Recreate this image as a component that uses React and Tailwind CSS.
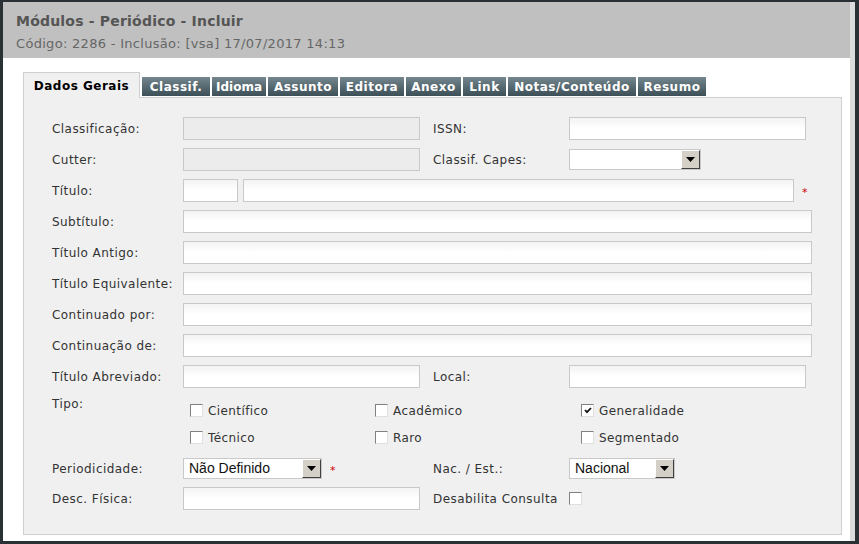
import React from 'react';

const FONT = { fontFamily: '"DejaVu Sans", Verdana, sans-serif' };
const SEL_FONT = { fontFamily: '"Liberation Sans", Arial, sans-serif' };

const TABS = [
  { t: 'Classif.', w: 'w-[68px]' },
  { t: 'Idioma', w: 'w-[54px] tracking-[0px]' },
  { t: 'Assunto', w: 'w-[70px]' },
  { t: 'Editora', w: 'w-[64px]' },
  { t: 'Anexo', w: 'w-[55px]' },
  { t: 'Link', w: 'w-[43px]' },
  { t: 'Notas/Conteúdo', w: 'w-[128px] tracking-[0.3px]' },
  { t: 'Resumo', w: 'w-[68px]' },
];

const Label = ({ children, className = 'w-[131px]' }) => (
  <div className={`${className} shrink-0 text-[12px] tracking-[0.45px] leading-[14px] text-[#333]`}>{children}</div>
);

const Field = ({ className = 'w-[237px]', disabled }) => (
  <div
    className={`${className} h-[23px] border border-[#c9c9c9] ${
      disabled ? 'bg-[#ececec]' : 'bg-gradient-to-b from-[#f3f3f3] via-white to-white'
    }`}
  />
);

const Arrow = () => (
  <div className="w-[19px] h-[19px] bg-[#d4d0c8] border border-t-white border-l-white border-r-[#404040] border-b-[#404040] flex items-center justify-center">
    <svg width="9" height="5" viewBox="0 0 9 5"><path d="M0 0h9L4.5 5z" fill="#000" /></svg>
  </div>
);

const Select = ({ className, value }) => (
  <div className={`${className} h-[21px] bg-white border border-[#c9c9c9] flex items-center justify-between`}>
    <span className="pl-[5px] text-[14px] text-[#111]" style={SEL_FONT}>{value}</span>
    <Arrow />
  </div>
);

const Check = ({ checked }) => (
  <div className="w-[13px] h-[13px] shrink-0 bg-white border border-t-[#808080] border-l-[#808080] border-r-[#e0e0e0] border-b-[#e0e0e0] flex items-center justify-center">
    {checked && (
      <svg width="8" height="7" viewBox="0 0 8 7"><path d="M1 3l2 2.2L7 1" stroke="#111" strokeWidth="1.8" fill="none" /></svg>
    )}
  </div>
);

const Opt = ({ label, checked, w }) => (
  <div className={`${w} h-[27px] flex items-center gap-[5px] text-[12px] tracking-[0.4px] text-[#333]`}>
    <Check checked={checked} />
    <span>{label}</span>
  </div>
);

const Star = () => <span className="text-[#c00] text-[11px] leading-none">*</span>;

export default function App() {
  return (
    <div className="w-[859px] h-[544px] bg-[#2a3135] pl-[3px] pt-[2px] pr-[4px] pb-[3px]" style={FONT}>
      <div className="w-full h-full bg-white flex flex-col border-r-[5px] border-[#dcdcdc]">
        <div className="h-[56px] bg-[#c0c0c0] pl-[13px] pt-[10px]">
          <div className="text-[14px] font-bold tracking-[0.2px] text-[#555] leading-[18px]">Módulos - Periódico - Incluir</div>
          <div className="text-[13px] tracking-[0.3px] text-[#666] mt-[6px] leading-[16px]">Código: 2286 - Inclusão: [vsa] 17/07/2017 14:13</div>
        </div>

        <div className="flex-1 pl-[20px] pr-[8px] pt-[14px] pb-[6px] flex flex-col">
          <div className="flex items-end h-[25px] relative z-10">
            <div className="w-[117px] h-[26px] mb-[-1px] bg-[#f0f0f0] border border-b-0 border-[#cfcfcf] flex items-center justify-center text-[12px] tracking-[0.5px] font-bold text-black mr-[2px]">
              Dados Gerais
            </div>
            {TABS.map(({ t, w }) => (
              <div
                key={t}
                className={`${w} h-[19px] mr-[2px] mb-[1px] bg-gradient-to-b from-[#74868e] to-[#3d4f57] text-white text-[12px] tracking-[0.5px] font-bold flex items-center justify-center whitespace-nowrap`}
              >
                {t}
              </div>
            ))}
          </div>

          <div className="flex-1 bg-[#f0f0f0] border border-[#cfcfcf] pl-[28px] pt-[19px]">
            <div className="flex flex-col gap-[8px]">
              <div className="flex items-center h-[23px]">
                <Label>Classificação:</Label>
                <Field disabled />
                <Label className="w-[136px] ml-[13px]">ISSN:</Label>
                <Field />
              </div>
              <div className="flex items-center h-[23px]">
                <Label>Cutter:</Label>
                <Field disabled />
                <Label className="w-[136px] ml-[13px]">Classif. Capes:</Label>
                <Select className="w-[132px]" value="" />
              </div>
              <div className="flex items-center h-[23px]">
                <Label>Título:</Label>
                <Field className="w-[55px]" />
                <Field className="w-[551px] ml-[5px]" />
                <span className="ml-[8px]"><Star /></span>
              </div>
              {['Subtítulo:', 'Título Antigo:', 'Título Equivalente:', 'Continuado por:', 'Continuação de:'].map((l) => (
                <div key={l} className="flex items-center h-[23px]">
                  <Label>{l}</Label>
                  <Field className="w-[629px]" />
                </div>
              ))}
              <div className="flex items-center h-[23px]">
                <Label>Título Abreviado:</Label>
                <Field />
                <Label className="w-[136px] ml-[13px]">Local:</Label>
                <Field />
              </div>
            </div>

            <div className="flex mt-[9px]">
              <Label>Tipo:</Label>
              <div className="pl-[7px] flex flex-col">
                <div className="flex">
                  <Opt w="w-[185px]" label="Científico" />
                  <Opt w="w-[206px]" label="Acadêmico" />
                  <Opt w="w-[150px]" label="Generalidade" checked />
                </div>
                <div className="flex">
                  <Opt w="w-[185px]" label="Técnico" />
                  <Opt w="w-[206px]" label="Raro" />
                  <Opt w="w-[150px]" label="Segmentado" />
                </div>
              </div>
            </div>

            <div className="flex items-center h-[21px] mt-[7px]">
              <Label>Periodicidade:</Label>
              <Select className="w-[139px]" value="Não Definido" />
              <span className="ml-[8px] w-[90px]"><Star /></span>
              <Label className="w-[136px] ml-[13px]">Nac. / Est.:</Label>
              <Select className="w-[106px]" value="Nacional" />
            </div>

            <div className="flex items-center h-[23px] mt-[8px]">
              <Label>Desc. Física:</Label>
              <Field />
              <Label className="w-[136px] ml-[13px]">Desabilita Consulta</Label>
              <Check />
            </div>
          </div>
        </div>
      </div>
    </div>
  );
}
